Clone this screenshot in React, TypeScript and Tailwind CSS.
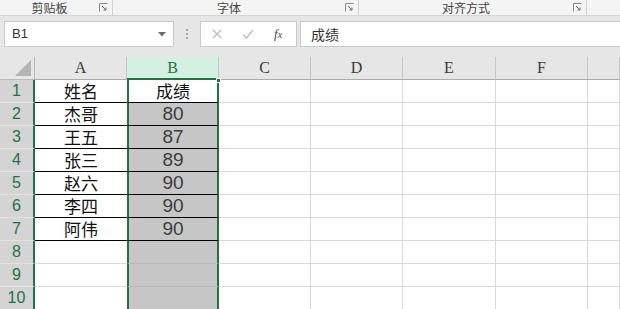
import React from 'react';

const cols = ['A', 'B', 'C', 'D', 'E', 'F', ''];
const rows: [string, string][] = [
  ['姓名', '成绩'],
  ['杰哥', '80'],
  ['王五', '87'],
  ['张三', '89'],
  ['赵六', '90'],
  ['李四', '90'],
  ['阿伟', '90'],
  ['', ''],
  ['', ''],
  ['', ''],
];

const cjk = { fontFamily: '"Noto Sans CJK SC", "Liberation Sans", sans-serif' };

const Launcher = () => (
  <svg width="9" height="9" viewBox="0 0 9 9" className="shrink-0">
    <path d="M0.5 8.5V0.5H8.5" fill="none" stroke="#8a8a8a" strokeWidth="1" />
    <path d="M3 3L7 7M7 4.5V7H4.5" fill="none" stroke="#6a6a6a" strokeWidth="1" />
  </svg>
);

const RibbonGroup = ({ label, width }: { label: string; width: string }) => (
  <div className={`flex items-center h-full border-r border-[#d0d0d0] pr-[4px] ${width}`}>
    <span className="flex-1 text-center text-[12px] leading-[14px] text-[#444]" style={cjk}>
      {label}
    </span>
    <Launcher />
  </div>
);

export default function App() {
  return (
    <div className="w-[620px] h-[309px] overflow-hidden bg-[#e6e6e6] relative">
      {/* ribbon labels */}
      <div className="flex h-[16px] bg-[#f4f4f4] border-b border-[#d6d6d6]">
        <RibbonGroup label="剪贴板" width="w-[113px]" />
        <RibbonGroup label="字体" width="w-[246px]" />
        <RibbonGroup label="对齐方式" width="w-[228px]" />
      </div>

      {/* formula bar */}
      <div className="flex items-center h-[41px] pt-[1px] pb-[6px]">
        <div className="ml-[4px] w-[170px] h-[26px] bg-white border border-[#c9c9c9] flex items-center justify-between pl-[7px] pr-[7px]">
          <span className="text-[13px] text-[#333]" style={{ fontFamily: '"Liberation Sans", sans-serif' }}>
            B1
          </span>
          <svg width="8" height="5" viewBox="0 0 8 5">
            <path d="M0 0H8L4 4.5Z" fill="#6b6b6b" />
          </svg>
        </div>
        <div className="w-[26px] flex flex-col items-center gap-[2px]">
          <span className="w-[2px] h-[2px] bg-[#a8a8a8]" />
          <span className="w-[2px] h-[2px] bg-[#a8a8a8]" />
          <span className="w-[2px] h-[2px] bg-[#a8a8a8]" />
        </div>
        <div className="w-[97px] h-[26px] bg-white border border-[#c9c9c9] flex items-center pl-[11px]">
          <svg width="10" height="10" viewBox="0 0 10 10">
            <path d="M1 1L9 9M9 1L1 9" stroke="#b9b9b9" strokeWidth="1.2" />
          </svg>
          <svg width="12" height="10" viewBox="0 0 12 10" className="ml-[20px]">
            <path d="M1 5.5L4.5 9L11 1" fill="none" stroke="#b9b9b9" strokeWidth="1.2" />
          </svg>
          <span
            className="ml-[20px] text-[13px] italic text-[#444]"
            style={{ fontFamily: '"Liberation Serif", serif' }}
          >
            f<span className="text-[10px]">x</span>
          </span>
        </div>
        <div className="ml-[3px] flex-1 h-[26px] bg-white border border-[#c9c9c9] border-r-0 flex items-center pl-[10px]">
          <span className="text-[14px] text-[#333]" style={cjk}>
            成绩
          </span>
        </div>
      </div>

      {/* sheet */}
      <div className="grid grid-cols-[35px_92px_92px_92px_92px_93px_92px_1fr] auto-rows-[23px] bg-white relative">
        {/* corner */}
        <div className="bg-[#e6e6e6] border-r border-b border-[#b9b9b9] flex items-end justify-end pr-[3px] pb-[3px]">
          <svg width="16" height="16" viewBox="0 0 16 16">
            <path d="M16 0V16H0Z" fill="#b4b4b4" />
          </svg>
        </div>
        {cols.map((c) =>
          c === 'B' ? (
            <div
              key={c}
              className="bg-[#d3f0e0] border-r border-[#c6c6c6] border-b-2 border-b-[#217346] flex items-center justify-center text-[16px] leading-none text-[#217346]"
              style={{ fontFamily: '"Liberation Serif", serif' }}
            >
              {c}
            </div>
          ) : (
            <div
              key={c || 'g'}
              className="bg-[#e6e6e6] border-r border-[#c6c6c6] border-b border-b-[#ababab] flex items-center justify-center text-[16px] leading-none text-[#3a3a3a]"
              style={{ fontFamily: '"Liberation Serif", serif' }}
            >
              {c}
            </div>
          )
        )}

        {rows.map(([a, b], i) => {
          const inTable = i < 7;
          return (
            <React.Fragment key={i}>
              <div
                className="bg-[#d4d4d4] border-b border-[#e2e2e2] border-r-2 border-r-[#217346] flex items-center justify-center text-[16px] leading-none text-[#217346]"
                style={{ fontFamily: '"Liberation Sans", sans-serif' }}
              >
                {i + 1}
              </div>
              <div
                className={`flex items-center justify-center text-[17px] leading-[18px] text-[#111] ${
                  inTable ? 'border-b border-black' : 'border-b border-[#dadada]'
                }`}
                style={cjk}
              >
                {a}
              </div>
              <div
                className={`border-l-2 border-r-2 border-[#217346] flex items-center justify-center leading-[18px] ${
                  i === 0 ? 'bg-white text-[17px] text-[#111]' : 'bg-[#c6c6c6] text-[19px] text-[#3c3c3c]'
                } ${inTable ? 'border-b border-b-black' : 'border-b border-b-[#b8b8b8]'}`}
                style={i === 0 ? cjk : { fontFamily: '"Liberation Sans", sans-serif' }}
              >
                {b}
              </div>
              {[0, 1, 2, 3, 4].map((k) => (
                <div key={k} className="border-r border-b border-[#dadada]" />
              ))}
            </React.Fragment>
          );
        })}
        {/* fill handle on active cell corner */}
        <div className="absolute left-[216px] top-[21px] w-[5px] h-[5px] bg-[#217346] border border-white" />
      </div>
    </div>
  );
}
